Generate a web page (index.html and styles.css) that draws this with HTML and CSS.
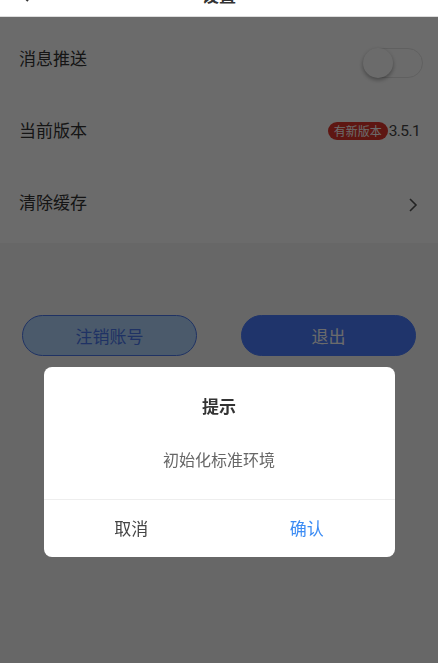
FILE: index.html
```html
<!DOCTYPE html>
<html lang="zh-CN">
<head>
  <meta charset="UTF-8" />
  <meta name="viewport" content="width=device-width, initial-scale=1.0" />
  <title>设置</title>
  <link rel="stylesheet" href="styles.css">
</head>
<body>
  <div class="header">
    <span class="back">
      <svg width="12" height="20" viewBox="0 0 12 20"><path d="M10 2 L2 10 L10 18" fill="none" stroke="#333" stroke-width="2"/></svg>
    </span>
    <span class="title">设置</span>
  </div>

  <div class="list">
    <div class="row">
      <span class="label">消息推送</span>
      <span class="switch"><span class="knob"></span></span>
    </div>
    <div class="row">
      <span class="label">当前版本</span>
      <span class="version"><span class="badge">有新版本</span>3.5.1</span>
    </div>
    <div class="row">
      <span class="label">清除缓存</span>
      <svg class="arrow" width="10" height="16" viewBox="0 0 10 16"><path d="M2 2 L8 8 L2 14" fill="none" stroke="#555" stroke-width="1.6"/></svg>
    </div>
  </div>

  <div class="actions">
    <button class="btn btn-plain">注销账号</button>
    <button class="btn btn-primary">退出</button>
  </div>

  <div class="mask">
    <div class="dialog">
      <div class="dialog-title">提示</div>
      <div class="dialog-msg">初始化标准环境</div>
      <div class="dialog-foot">
        <span class="cancel">取消</span>
        <span class="ok">确认</span>
      </div>
    </div>
  </div>
</body>
</html>
```

FILE: styles.css
```css
body { margin: 0; background: #f5f5f5; height: 663px; overflow: hidden;
  font-family: "Noto Sans CJK SC", "Noto Sans", sans-serif; color: #333; }

.header { height: 44px; margin-top: -28px; background: #fff; border-bottom: 1px solid #ddd;
  display: flex; align-items: center; justify-content: center; position: relative; }
.back { position: absolute; left: 18px; top: 11px; }
.title { font-size: 17px; font-weight: bold; }

.list { background: #fff; padding: 4px 0 6px; }
.row { height: 72px; display: flex; align-items: center; justify-content: space-between;
  padding: 0 18px 0 19px; }
.label { font-size: 17px; }

.switch { width: 58px; height: 28px; border: 1px solid #e5e5e5; border-radius: 15px;
  display: flex; align-items: center; margin: 12px -3px 0 0; }
.knob { width: 30px; height: 30px; border-radius: 50%; background: #fff;
  box-shadow: 0 2px 4px rgba(0,0,0,0.35); margin-left: -1px; }

.version { display: flex; align-items: center; font-size: 15.5px; color: #444; letter-spacing: -0.6px;
  font-family: Roboto, "Noto Sans CJK SC", sans-serif; margin-top: 4px; }
.badge { background: #e0352b; color: #fff; font-size: 12px; height: 18px; line-height: 18px;
  padding: 0 6px; border-radius: 9px; margin-right: 1px; letter-spacing: 0;
  font-family: "Noto Sans CJK SC", sans-serif; }
.arrow { margin: 8px 2px 0 0; }

.actions { display: flex; justify-content: space-between; padding: 72px 22px 0; }
.btn { width: 175px; height: 41px; border-radius: 21px; font-size: 17px;
  font-family: "Noto Sans CJK SC", sans-serif; }
.btn-plain { background: #b4d6ff; border: 1px solid #4a78ee; color: #4a78ee; }
.btn-primary { background: #4a7dff; border: 1px solid #4a7dff; color: #fff; }

.mask { position: fixed; left: 0; right: 0; top: 17px; bottom: 0; background: rgba(0,0,0,0.58);
  display: flex; justify-content: center; align-items: flex-start; padding-top: 350px; }
.dialog { width: 351px; height: 190px; background: #fff; border-radius: 8px; overflow: hidden;
  display: flex; flex-direction: column; }
.dialog-title { font-size: 17px; font-weight: bold; text-align: center; margin-top: 26px; height: 26px; }
.dialog-msg { font-size: 16px; color: #666; text-align: center; margin-top: 28px; height: 24px; }
.dialog-foot { margin-top: auto; height: 57px; border-top: 1px solid #eee; display: flex; }
.dialog-foot span { flex: 1; display: flex; align-items: center; justify-content: center;
  font-size: 17px; padding-bottom: 2px; }
.cancel { color: #444; }
.ok { color: #3c8cf4; }
```
